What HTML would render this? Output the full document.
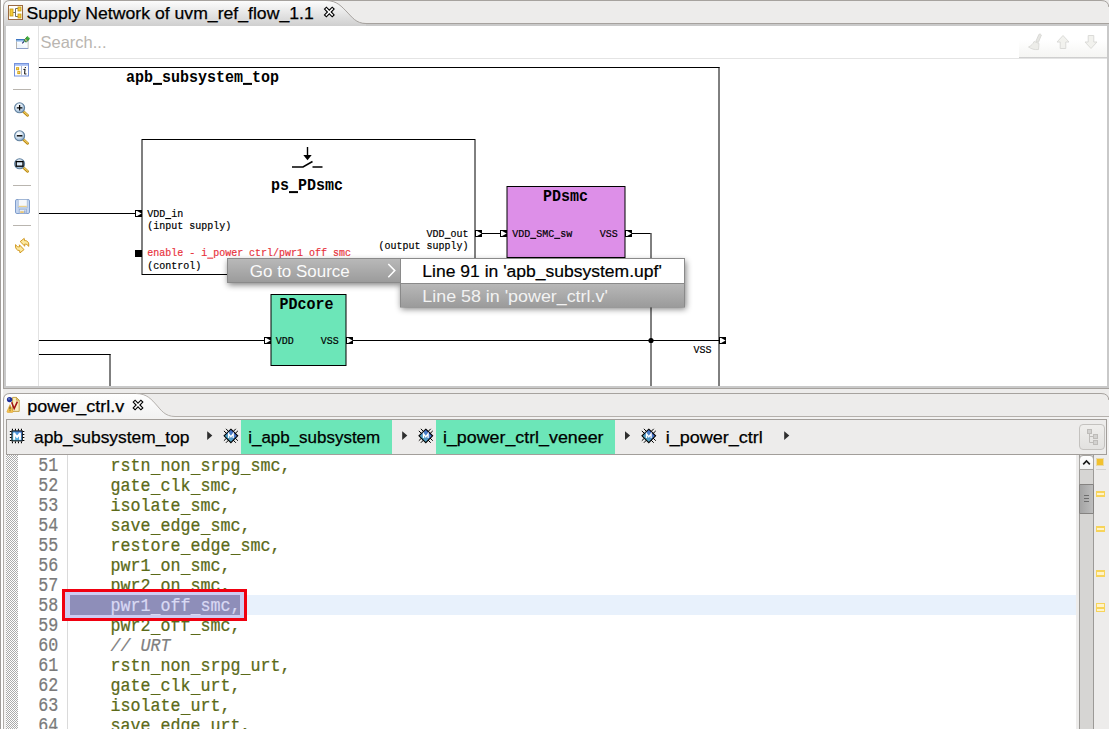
<!DOCTYPE html>
<html><head><meta charset="utf-8"><title>Supply Network</title>
<style>
html,body{margin:0;padding:0;}
body{width:1109px;height:729px;overflow:hidden;background:#EDECEB;position:relative;font-family:"Liberation Sans",sans-serif;}
.abs{position:absolute;}
svg{position:absolute;left:0;top:0;}
text{white-space:pre;}
</style></head><body>


<div class="abs" style="left:0;top:0;width:1px;height:729px;background:#A19D9A"></div>
<div class="abs" style="left:1px;top:0;width:2px;height:729px;background:#fff"></div>

<!-- upper panel frame -->
<div class="abs" style="left:3px;top:23px;width:1106px;height:366px;background:#A6A29E"></div>
<div class="abs" style="left:4px;top:24px;width:1105px;height:364px;background:#C9C9C9"></div>
<div class="abs" style="left:6px;top:26px;width:1101px;height:360px;background:#fff"></div>
<!-- search row / toolbar -->
<div class="abs" style="left:38px;top:26px;width:1px;height:360px;background:#E2E2E2"></div>
<div class="abs" style="left:39px;top:58px;width:980px;height:1px;background:#E4E4E4"></div>
<div class="abs" style="left:1019px;top:26px;width:88px;height:31px;background:linear-gradient(#fff 45%,#F5F5F3)"></div>
<div class="abs" style="left:1019px;top:57px;width:88px;height:1px;background:#CFCFCF"></div>
<div class="abs" style="left:1019px;top:58px;width:88px;height:1px;background:#E4E4E4"></div>

<!-- lower panel -->
<div class="abs" style="left:4px;top:417px;width:1105px;height:312px;background:#F3F2F1"></div>
<div class="abs" style="left:3px;top:400px;width:1px;height:329px;background:#B0ACA9"></div>
<div class="abs" style="left:6px;top:455px;width:1070px;height:274px;background:#fff"></div>
<div class="abs" style="left:4px;top:394px;width:1105px;height:23px;background:#EDECEB"></div>
<!-- breadcrumb -->
<div class="abs" style="left:6px;top:419px;width:1101px;height:36px;background:#EDECEB;border:1px solid #A29E9A;box-sizing:border-box"></div>
<div class="abs" style="left:241px;top:420px;width:151px;height:34px;background:#6CE6B8"></div>
<div class="abs" style="left:436px;top:420px;width:179px;height:34px;background:#6CE6B8"></div>
<div class="abs" style="left:1079px;top:424px;width:26px;height:26px;box-sizing:border-box;border:1px solid #C4C2BF;border-radius:4px;background:linear-gradient(#EFEEEC,#E2E1DF)"></div>
<!-- editor -->
<div class="abs" style="left:6px;top:455px;width:12px;height:274px;background-image:conic-gradient(#ABABAB 25%,#fff 0 50%,#ABABAB 0 75%,#fff 0);background-size:2px 2px"></div>
<div class="abs" style="left:67px;top:455px;width:1px;height:274px;background:#DADADA"></div>
<div class="abs" style="left:68px;top:595px;width:1008px;height:20px;background:#E8F1FC"></div>
<!-- right strip + scrollbar + overview ruler -->
<div class="abs" style="left:1076px;top:455px;width:33px;height:274px;background:#EDECEB"></div>
<div class="abs" style="left:1079px;top:455px;width:15px;height:274px;background:#D6D5D3;border-left:1px solid #9C9A97;border-right:1px solid #9C9A97;box-sizing:border-box"></div>
<div class="abs" style="left:1079px;top:455px;width:15px;height:15px;box-sizing:border-box;border:1px solid #A8A6A3;border-radius:4px 4px 0 0;background:linear-gradient(#fff,#F2F2F2)"></div>
<div class="abs" style="left:1079px;top:484px;width:15px;height:30px;box-sizing:border-box;border:1px solid #858381;border-radius:1px;background:linear-gradient(90deg,#A4A4A4,#BDBDBD)"></div>
<div class="abs" style="left:1096px;top:469px;width:10px;height:1px;background:#D4D2CF"></div>
<div class="abs" style="left:1096px;top:458px;width:8px;height:8px;background:#F2C12E;border:1px solid #E8D9A8;box-sizing:border-box"></div>

<div class="abs" style="left:1096px;top:491px;width:9px;height:6px;box-sizing:border-box;border:2px solid #F7D45A;border-left-width:1.5px;border-right-width:1.5px;background:#FFF3C8"></div>
<div class="abs" style="left:1096px;top:526px;width:9px;height:6px;box-sizing:border-box;border:2px solid #F7D45A;border-left-width:1.5px;border-right-width:1.5px;background:#FFF3C8"></div>
<div class="abs" style="left:1096px;top:570px;width:9px;height:7px;box-sizing:border-box;border:2px solid #F7D45A;border-left-width:1.5px;border-right-width:1.5px;background:#FFF3C8"></div>
<div class="abs" style="left:1096px;top:603px;width:9px;height:9px;box-sizing:border-box;border:1.5px solid #F7D45A;background:#FFF3C8"></div>
<div class="abs" style="left:1096px;top:606.5px;width:9px;height:2px;background:#F7D45A"></div>
<svg width="1109" height="729" viewBox="0 0 1109 729">
<defs>
<linearGradient id="tabg" x1="0" y1="0" x2="0" y2="1"><stop offset="0" stop-color="#FDFDFD"/><stop offset="1" stop-color="#CFCFCF"/></linearGradient>
<linearGradient id="tabg2" x1="0" y1="0" x2="0" y2="1"><stop offset="0" stop-color="#FFFFFF"/><stop offset="1" stop-color="#F2F2F2"/></linearGradient>
<linearGradient id="mg" x1="0" y1="0" x2="0" y2="1"><stop offset="0" stop-color="#B9B9B9"/><stop offset="1" stop-color="#9B9B9B"/></linearGradient>
<filter id="sh" x="-10%" y="-30%" width="120%" height="180%"><feGaussianBlur stdDeviation="3.4"/></filter>
<radialGradient id="lens" cx="0.38" cy="0.32" r="0.72"><stop offset="0" stop-color="#FFFFFF"/><stop offset="0.55" stop-color="#CFE0F0"/><stop offset="1" stop-color="#7C9FC2"/></radialGradient>
<linearGradient id="cg" x1="1" y1="0" x2="0" y2="1"><stop offset="0" stop-color="#4A78D8"/><stop offset="1" stop-color="#62CDE2"/></linearGradient>
<linearGradient id="ig" x1="1" y1="0" x2="0" y2="1"><stop offset="0.2" stop-color="#4464C8"/><stop offset="0.9" stop-color="#56BEC6"/></linearGradient>
</defs>
<path d="M3,26 L3,7 Q3,0.5 10,0.5 L326,0.5 C337,0.5 342,7 347,12 S356,23.5 366,23.5 L366,26 Z" fill="url(#tabg)"/>
<path d="M3.5,26 L3.5,7 Q3.5,0.5 10,0.5 L1101,0.5 Q1108.5,0.5 1108.8,7" fill="none" stroke="#A6A29E" stroke-width="1"/>
<path d="M326,0.5 C337,0.5 342,7 347,12 S356,23.5 366,23.5" fill="none" stroke="#A6A29E" stroke-width="1"/>
<g>
<rect x="8.5" y="5.5" width="14" height="14" fill="#fff" stroke="#9A6A42"/>
<path d="M13,12.5 H16 M15.5,8.5 V16.5 M15.5,8.5 H18 M15.5,16.5 H18" stroke="#6B6B6B" stroke-width="1" fill="none"/>
<rect x="10" y="9" width="3" height="7" fill="#F4CC3A" stroke="#C79A10" stroke-width="0.8"/>
<rect x="18" y="7" width="3" height="4" fill="#F4CC3A" stroke="#C79A10" stroke-width="0.8"/>
<rect x="18" y="14" width="3" height="4" fill="#F4CC3A" stroke="#C79A10" stroke-width="0.8"/>
</g>
<text x="26.5" y="19" font-family="Liberation Sans" font-size="17.4" fill="#000" stroke="#000" stroke-width="0.25" textLength="287.2" lengthAdjust="spacingAndGlyphs" >Supply Network of uvm_ref_flow_1.1</text>
<g transform="translate(329.3,12)"><path d="M-4.8,-2.9 L-2.9,-4.8 L0,-1.9 L2.9,-4.8 L4.8,-2.9 L1.9,0 L4.8,2.9 L2.9,4.8 L0,1.9 L-2.9,4.8 L-4.8,2.9 L-1.9,0 Z" fill="#fff" stroke="#000" stroke-width="1.15" stroke-linejoin="miter"/></g>
<text x="40.5" y="48" font-family="Liberation Sans" font-size="16.5" fill="#B9B5B0" textLength="66" lengthAdjust="spacingAndGlyphs" >Search...</text>
<g transform="translate(14,33)">
<rect x="2.5" y="6.5" width="11.5" height="9" fill="#EEF5FD" stroke="#B4B2AC"/>
<path d="M2.5,15.5 H14" stroke="#8C9EC6"/>
<path d="M3,10 L13.5,15 V9 H3 Z" fill="#FAFCFF"/>
<rect x="2" y="6" width="12.5" height="1.6" fill="#3C76C4"/>
<rect x="2" y="7.6" width="12.5" height="1" fill="#9CC2EE"/>
<path d="M8.2,10.4 L10.2,8.4" stroke="#1C2C6C" stroke-width="1.1"/>
<path d="M10,7.4 L13.4,3.4 L15.8,5.6 L12,9.2 Z" fill="#3CAA3C" stroke="#1E7A22" stroke-width="0.8" stroke-linejoin="round"/>
<path d="M11,6.2 L13,8.2" stroke="#C8A884" stroke-width="1.5"/>
<path d="M13.2,3.4 L15.8,5.8" stroke="#78D070" stroke-width="1"/>
</g>
<g transform="translate(14,63)">
<rect x="0.5" y="0.5" width="14" height="12.5" fill="#fff" stroke="#7492DC"/>
<rect x="1" y="1" width="13" height="1.8" fill="#A4BCF2"/>
<path d="M7.5,3 V12.6" stroke="#AEB8CC"/>
<rect x="2.1" y="4.2" width="3" height="3" fill="#D6A412"/><rect x="3.1" y="5.2" width="1" height="1" fill="#FBE9A8"/>
<rect x="3.3" y="8.1" width="3" height="3" fill="#D6A412"/><rect x="4.3" y="9.1" width="1" height="1" fill="#FBE9A8"/>
<path d="M9.4,6.6 Q10.6,6 11,6.4 L10.6,10.4 Q10.8,11.4 12.4,10.8" stroke="#1a1a1a" stroke-width="1.1" fill="none"/>
<rect x="10.8" y="4" width="1.1" height="1.1" fill="#1a1a1a"/>
</g>
<rect x="13" y="89" width="18" height="1" fill="#B9B5AF"/>
<rect x="13" y="185" width="18" height="1" fill="#B9B5AF"/>
<rect x="13" y="225" width="18" height="1" fill="#B9B5AF"/>
<g transform="translate(14,102)"><path d="M9.3,9.5 L13.7,13.5" stroke="#B8860B" stroke-width="2.5" stroke-linecap="round"/><path d="M9.3,9.2 L13.6,13.1" stroke="#F1D06B" stroke-width="1.1" stroke-linecap="round"/><circle cx="5.6" cy="5.8" r="5" fill="url(#lens)" stroke="#62829F" stroke-width="1.1"/><path d="M2.8,5.8 H8.4 M5.6,3 V8.6" stroke="#000" stroke-width="1.3"/></g>
<g transform="translate(14,130)"><path d="M9.3,9.5 L13.7,13.5" stroke="#B8860B" stroke-width="2.5" stroke-linecap="round"/><path d="M9.3,9.2 L13.6,13.1" stroke="#F1D06B" stroke-width="1.1" stroke-linecap="round"/><circle cx="5.6" cy="5.8" r="5" fill="url(#lens)" stroke="#62829F" stroke-width="1.1"/><path d="M2.8,5.8 H8.4" stroke="#000" stroke-width="1.4"/></g>
<g transform="translate(14,158)"><path d="M9.3,9.5 L13.7,13.5" stroke="#B8860B" stroke-width="2.5" stroke-linecap="round"/><path d="M9.3,9.2 L13.6,13.1" stroke="#F1D06B" stroke-width="1.1" stroke-linecap="round"/><circle cx="5.6" cy="5.8" r="5" fill="url(#lens)" stroke="#62829F" stroke-width="1.1"/><rect x="2.2" y="3.6" width="6.8" height="4.6" fill="#DCEBFA" stroke="#000" stroke-width="1.3"/></g>
<g transform="translate(15,199)">
<rect x="0.5" y="0.5" width="14" height="14" rx="1.4" fill="#C5D6F0" stroke="#7F9DCB"/>
<rect x="3.2" y="0.6" width="9" height="8.2" fill="#F6F8FB" stroke="#9DB2D2" stroke-width="0.7"/>
<path d="M3.6,7.4 H11.8" stroke="#EBD08A" stroke-width="1.2"/>
<rect x="4.2" y="10.2" width="7.2" height="4.3" fill="#E6EDF7" stroke="#8AA2CC" stroke-width="0.7"/>
<rect x="5.2" y="12.2" width="3.6" height="1.8" fill="#E9C677"/>
<rect x="9.2" y="11.4" width="1.3" height="2.8" fill="#8AA2CC"/>
</g>
<g transform="translate(15,238)" fill="#FCE9A0" stroke="#CF9418" stroke-width="0.95" stroke-linejoin="round">
<path d="M5.2,3.6 L9.2,0.4 L9.6,2.6 C12.6,2.4 14.4,4.8 13.6,8.4 C12.6,6.4 11.4,6 9.6,6.2 L9.8,8.2 Z"/>
<path d="M9,11.6 L5,14.9 L4.6,12.6 C1.6,12.6 0,10.2 0.6,6.6 C1.6,8.6 2.8,9 4.6,8.8 L4.4,6.8 Z"/>
</g>
<g opacity="0.9">
<path d="M1039,34.2 q1.6,-0.6 2.4,0.8 l-3,7.4 l-2.6,-1 Z" fill="#E4E4E0" stroke="#CFCFCB" stroke-width="0.8"/>
<path d="M1034,41.5 l5,2 l-0.5,6 c-4,0.5 -7,-0.5 -10,-2.5 c3,-1.5 4.5,-3 5.5,-5.5 Z" fill="#ECECE8" stroke="#D2D2CE" stroke-width="0.8"/>
<path d="M1063,35.5 l6,6.5 h-3.2 v6.5 h-5.6 v-6.5 h-3.2 Z" fill="#F1F1ED" stroke="#D4D4D0" stroke-width="0.9"/>
<path d="M1091,48.5 l6,-6.5 h-3.2 v-6.5 h-5.6 v6.5 h-3.2 Z" fill="#F1F1ED" stroke="#D4D4D0" stroke-width="0.9"/>
</g>
<g fill="none" stroke="#000" stroke-width="1">
<path d="M39,67.5 H719.5"/>
<path d="M719,67 V386"/>
<rect x="142" y="139.5" width="333" height="135" fill="#fff"/>
<path d="M39,213.5 H135"/>
<path d="M482,233.5 H500"/>
<rect x="507" y="186.5" width="118" height="71" fill="#DD8FE8"/>
<path d="M632,233.5 H650.5 M651,233 V386"/>
<rect x="271" y="294.5" width="75" height="71" fill="#6CE6B8"/>
<path d="M39,340.5 H264 M353,340.5 H719"/>
<path d="M39,354.5 H110.5 M110,354 V386"/>
</g>
<circle cx="651" cy="340.5" r="2.6" fill="#000"/>
<rect x="135" y="210" width="7" height="7" fill="#000"/><path d="M136,211 L137.2,211 L141.6,213.5 L137.2,216 L136,216 Z" fill="#fff"/>
<rect x="475" y="230" width="7" height="7" fill="#000"/><path d="M476,231 L477.2,231 L481.6,233.5 L477.2,236 L476,236 Z" fill="#fff"/>
<rect x="500" y="230" width="7" height="7" fill="#000"/><path d="M501,231 L502.2,231 L506.6,233.5 L502.2,236 L501,236 Z" fill="#fff"/>
<rect x="625" y="230" width="7" height="7" fill="#000"/><path d="M626,231 L627.2,231 L631.6,233.5 L627.2,236 L626,236 Z" fill="#fff"/>
<rect x="264" y="337" width="7" height="7" fill="#000"/><path d="M265,338 L266.2,338 L270.6,340.5 L266.2,343 L265,343 Z" fill="#fff"/>
<rect x="346" y="337" width="7" height="7" fill="#000"/><path d="M347,338 L348.2,338 L352.6,340.5 L348.2,343 L347,343 Z" fill="#fff"/>
<rect x="719" y="337" width="7" height="7" fill="#000"/><path d="M720,338 L721.2,338 L725.6,340.5 L721.2,343 L720,343 Z" fill="#fff"/>
<rect x="135" y="250" width="7" height="7" fill="#000"/>
<path d="M307.5,147 V156" stroke="#000" stroke-width="1.4" fill="none"/><path d="M303.3,155 H311.7 L307.5,160.2 Z" fill="#000"/>
<path d="M292,167 H303 L312.5,161.5 M312.5,167 H322.5" stroke="#000" stroke-width="1.6" fill="none"/>
<rect x="153.00" y="82.9" width="9" height="2" fill="#000"/><rect x="243.00" y="82.9" width="9" height="2" fill="#000"/><text transform="translate(126,81.5) scale(1,1.13)" font-family="Liberation Mono" font-size="15" fill="#000" font-weight="bold" >apb subsystem top</text>
<rect x="289.00" y="191.1" width="9" height="2" fill="#000"/><text transform="translate(271,189.7) scale(1,1.13)" font-family="Liberation Mono" font-size="15" fill="#000" font-weight="bold" >ps PDsmc</text>
<text transform="translate(543,201) scale(1,1.13)" font-family="Liberation Mono" font-size="15" fill="#000" font-weight="bold" >PDsmc</text>
<text transform="translate(279.6,309) scale(1,1.13)" font-family="Liberation Mono" font-size="15" fill="#000" font-weight="bold" >PDcore</text>
<rect x="165.20" y="218.0" width="6" height="1.1" fill="#000"/><text transform="translate(147.2,216.9) scale(1,1.15)" font-family="Liberation Mono" font-size="10" fill="#000" stroke="#000" stroke-width="0.18" >VDD in</text>
<text transform="translate(147.2,229) scale(1,1.15)" font-family="Liberation Mono" font-size="10" fill="#000" stroke="#000" stroke-width="0.18" >(input supply)</text>
<rect x="207.20" y="257.59999999999997" width="6" height="1.1" fill="#E8323C"/><text transform="translate(147.2,256.4) scale(1,1.15)" font-family="Liberation Mono" font-size="10" fill="#E8323C" stroke="#E8323C" stroke-width="0.18" >enable - i power ctrl/pwr1 off smc</text>
<text transform="translate(147.2,268.8) scale(1,1.15)" font-family="Liberation Mono" font-size="10" fill="#000" stroke="#000" stroke-width="0.18" >(control)</text>
<rect x="444.60" y="237.79999999999998" width="6" height="1.1" fill="#000"/><text transform="translate(426.6,236.7) scale(1,1.15)" font-family="Liberation Mono" font-size="10" fill="#000" stroke="#000" stroke-width="0.18" >VDD out</text>
<text transform="translate(378.6,248.9) scale(1,1.15)" font-family="Liberation Mono" font-size="10" fill="#000" stroke="#000" stroke-width="0.18" >(output supply)</text>
<rect x="530.20" y="237.79999999999998" width="6" height="1.1" fill="#000"/><rect x="554.20" y="237.79999999999998" width="6" height="1.1" fill="#000"/><text transform="translate(512.2,236.7) scale(1,1.15)" font-family="Liberation Mono" font-size="10" fill="#000" stroke="#000" stroke-width="0.18" >VDD SMC sw</text>
<text transform="translate(599.8,236.7) scale(1,1.15)" font-family="Liberation Mono" font-size="10" fill="#000" stroke="#000" stroke-width="0.18" >VSS</text>
<text transform="translate(275.8,344) scale(1,1.15)" font-family="Liberation Mono" font-size="10" fill="#000" stroke="#000" stroke-width="0.18" >VDD</text>
<text transform="translate(320.8,344) scale(1,1.15)" font-family="Liberation Mono" font-size="10" fill="#000" stroke="#000" stroke-width="0.18" >VSS</text>
<text transform="translate(693.6,352.5) scale(1,1.15)" font-family="Liberation Mono" font-size="10" fill="#000" stroke="#000" stroke-width="0.18" >VSS</text>
<rect x="228" y="261" width="173" height="24" fill="#000" opacity="0.5" filter="url(#sh)"/>
<rect x="401" y="261" width="285" height="48" fill="#000" opacity="0.5" filter="url(#sh)"/>
<rect x="227.5" y="258.5" width="173" height="24" fill="url(#mg)" stroke="#8A8A8A"/>
<rect x="400.5" y="258.5" width="284" height="48.5" fill="#fff" stroke="#8A8A8A"/>
<rect x="401" y="283" width="283" height="24" fill="url(#mg)"/>
<path d="M400.5,283.5 H684.5" stroke="#8A8A8A"/>
<text x="249.8" y="276.8" font-family="Liberation Sans" font-size="17.2" fill="#FAFAFA" textLength="100" lengthAdjust="spacingAndGlyphs" >Go to Source</text>
<path d="M388.3,264 L394.8,270.6 L388.3,277.2" fill="none" stroke="#fff" stroke-width="1.5"/>
<text x="422.3" y="277" font-family="Liberation Sans" font-size="17.4" fill="#000" stroke="#000" stroke-width="0.2" textLength="239.5" lengthAdjust="spacingAndGlyphs" >Line 91 in 'apb_subsystem.upf'</text>
<text x="422.3" y="301.5" font-family="Liberation Sans" font-size="17.4" fill="#F2F2F2" textLength="185.5" lengthAdjust="spacingAndGlyphs" >Line 58 in 'power_ctrl.v'</text>
<path d="M4,417 L4,400 Q4,393.5 10,393.5 L136,393.5 C147,393.5 152,400 156.5,405 S165,416.5 175,416.5 L175,417 Z" fill="url(#tabg2)"/>
<path d="M3.5,401 L3.5,400 Q3.5,393.5 10,393.5 L1101,393.5 Q1108.5,393.5 1108.8,400" fill="none" stroke="#A6A29E"/>
<path d="M136,393.5 C147,393.5 152,400 156.5,405 S165,416.5 175,416.5 H1109" fill="none" stroke="#B4B0AC"/>
<g transform="translate(7,396)">
<path d="M5.6,1.4 H9.4 L12.2,4.2 V15.4 H5.6 Z" fill="#FBEFC0" stroke="#C09A3A" stroke-width="0.9"/>
<path d="M9.4,1.4 V4.2 H12.2 Z" fill="#E8CF80" stroke="#C09A3A" stroke-width="0.7"/>
<path d="M4.6,6.2 L7.2,12.6 L10.4,5.6" stroke="#A01414" stroke-width="1.5" fill="none"/>
<path d="M3,8.6 L6.2,15.6 Q6.2,16.4 5.2,16.4 H0.8 Q-0.2,16.4 0,15.6 Z" fill="#F6C652" stroke="#D89A28" stroke-width="0.6"/>
<path d="M3,10.6 V13.4 M3,14.4 V15.2" stroke="#5A3A08" stroke-width="1"/>
<circle cx="2.6" cy="3.6" r="2.7" fill="#1E2F98"/>
<circle cx="2" cy="2.9" r="1.1" fill="#5F74C8"/>
</g>
<text x="27.2" y="411.7" font-family="Liberation Sans" font-size="17.4" fill="#000" stroke="#000" stroke-width="0.25" textLength="97" lengthAdjust="spacingAndGlyphs" >power_ctrl.v</text>
<g transform="translate(138,405)"><path d="M-4.8,-2.9 L-2.9,-4.8 L0,-1.9 L2.9,-4.8 L4.8,-2.9 L1.9,0 L4.8,2.9 L2.9,4.8 L0,1.9 L-2.9,4.8 L-4.8,2.9 L-1.9,0 Z" fill="#fff" stroke="#000" stroke-width="1.15" stroke-linejoin="miter"/></g>
<g transform="translate(10,429)"><rect x="0" y="0" width="14.2" height="14" rx="2" fill="#fff" opacity="0.75"/><g stroke="#000" stroke-width="1.7" stroke-dasharray="1.1 1.9"><path d="M1.9,0.7 H13 M1.9,13.3 H13 M0.7,1.9 V13 M13.5,1.9 V13"/></g><rect x="1.9" y="1.9" width="10.4" height="10" fill="url(#cg)" stroke="#000" stroke-width="1"/><path d="M4.2,10.8 V4.4 L7.1,8.2 L10,4.4 V10.8" stroke="#fff" stroke-width="1.9" fill="none" stroke-linejoin="round"/></g>
<text x="34" y="442.6" font-family="Liberation Sans" font-size="17.4" fill="#000" stroke="#000" stroke-width="0.25" textLength="155.5" lengthAdjust="spacingAndGlyphs" >apb_subsystem_top</text>
<path d="M207.2,431.3 L212.29999999999998,435.6 L207.2,439.90000000000003 Z" fill="#2E2E2E"/>
<g transform="translate(230.89999999999998,435.8)"><g transform="rotate(0)"><path d="M-2.4,-4.4 L-4.65,-6.7 M-4.4,-2.4 L-6.7,-4.65" stroke="#000" stroke-width="1" stroke-linecap="round"/></g><g transform="rotate(90)"><path d="M-2.4,-4.4 L-4.65,-6.7 M-4.4,-2.4 L-6.7,-4.65" stroke="#000" stroke-width="1" stroke-linecap="round"/></g><g transform="rotate(180)"><path d="M-2.4,-4.4 L-4.65,-6.7 M-4.4,-2.4 L-6.7,-4.65" stroke="#000" stroke-width="1" stroke-linecap="round"/></g><g transform="rotate(270)"><path d="M-2.4,-4.4 L-4.65,-6.7 M-4.4,-2.4 L-6.7,-4.65" stroke="#000" stroke-width="1" stroke-linecap="round"/></g><path d="M0,-6.6 L6.8,0 L0,6.8 L-6.8,0 Z" fill="url(#ig)" stroke="#000" stroke-width="1.1"/><path d="M-2.3,2.3 V-2.1 L0,1 L2.3,-2.1 V2.3" stroke="#fff" stroke-width="1.3" fill="none"/></g>
<text x="248.2" y="442.6" font-family="Liberation Sans" font-size="17.4" fill="#000" stroke="#000" stroke-width="0.25" textLength="132" lengthAdjust="spacingAndGlyphs" >i_apb_subsystem</text>
<path d="M402.2,431.3 L407.3,435.6 L402.2,439.90000000000003 Z" fill="#2E2E2E"/>
<g transform="translate(425.8,435.8)"><g transform="rotate(0)"><path d="M-2.4,-4.4 L-4.65,-6.7 M-4.4,-2.4 L-6.7,-4.65" stroke="#000" stroke-width="1" stroke-linecap="round"/></g><g transform="rotate(90)"><path d="M-2.4,-4.4 L-4.65,-6.7 M-4.4,-2.4 L-6.7,-4.65" stroke="#000" stroke-width="1" stroke-linecap="round"/></g><g transform="rotate(180)"><path d="M-2.4,-4.4 L-4.65,-6.7 M-4.4,-2.4 L-6.7,-4.65" stroke="#000" stroke-width="1" stroke-linecap="round"/></g><g transform="rotate(270)"><path d="M-2.4,-4.4 L-4.65,-6.7 M-4.4,-2.4 L-6.7,-4.65" stroke="#000" stroke-width="1" stroke-linecap="round"/></g><path d="M0,-6.6 L6.8,0 L0,6.8 L-6.8,0 Z" fill="url(#ig)" stroke="#000" stroke-width="1.1"/><path d="M-2.3,2.3 V-2.1 L0,1 L2.3,-2.1 V2.3" stroke="#fff" stroke-width="1.3" fill="none"/></g>
<text x="443" y="442.6" font-family="Liberation Sans" font-size="17.4" fill="#000" stroke="#000" stroke-width="0.25" textLength="160.5" lengthAdjust="spacingAndGlyphs" >i_power_ctrl_veneer</text>
<path d="M625,431.3 L630.1,435.6 L625,439.90000000000003 Z" fill="#2E2E2E"/>
<g transform="translate(648.8000000000001,435.8)"><g transform="rotate(0)"><path d="M-2.4,-4.4 L-4.65,-6.7 M-4.4,-2.4 L-6.7,-4.65" stroke="#000" stroke-width="1" stroke-linecap="round"/></g><g transform="rotate(90)"><path d="M-2.4,-4.4 L-4.65,-6.7 M-4.4,-2.4 L-6.7,-4.65" stroke="#000" stroke-width="1" stroke-linecap="round"/></g><g transform="rotate(180)"><path d="M-2.4,-4.4 L-4.65,-6.7 M-4.4,-2.4 L-6.7,-4.65" stroke="#000" stroke-width="1" stroke-linecap="round"/></g><g transform="rotate(270)"><path d="M-2.4,-4.4 L-4.65,-6.7 M-4.4,-2.4 L-6.7,-4.65" stroke="#000" stroke-width="1" stroke-linecap="round"/></g><path d="M0,-6.6 L6.8,0 L0,6.8 L-6.8,0 Z" fill="url(#ig)" stroke="#000" stroke-width="1.1"/><path d="M-2.3,2.3 V-2.1 L0,1 L2.3,-2.1 V2.3" stroke="#fff" stroke-width="1.3" fill="none"/></g>
<text x="665.8" y="442.6" font-family="Liberation Sans" font-size="17.4" fill="#000" stroke="#000" stroke-width="0.25" textLength="97" lengthAdjust="spacingAndGlyphs" >i_power_ctrl</text>
<path d="M784.2,431.3 L789.3000000000001,435.6 L784.2,439.90000000000003 Z" fill="#2E2E2E"/>
<g stroke="#BEBCB9" fill="#D2D1CF" stroke-width="1">
<path d="M1089.5,434 V442.5 H1093 M1089.5,436.5 H1093" fill="none"/>
<rect x="1087.5" y="429.5" width="4" height="4"/><rect x="1093.5" y="434.5" width="4" height="4"/><rect x="1093.5" y="440.5" width="4" height="4"/>
</g>
<path d="M1083.2,464.3 L1086.5,461 L1089.8,464.3" stroke="#1A1A1A" stroke-width="1.7" fill="none"/>
<path d="M1084,495.5 H1089 M1084,498.5 H1089 M1084,501.5 H1089" stroke="#6E6E6E" stroke-width="1"/>
<text transform="translate(38.2,471) scale(1,1.19)" font-family="Liberation Mono" font-size="16.667" fill="#7A7A7A" stroke="#7A7A7A" stroke-width="0.2" >51</text>
<rect x="150.60" y="474" width="10" height="1" fill="#5B6A18"/><rect x="190.60" y="474" width="10" height="1" fill="#5B6A18"/><rect x="240.60" y="474" width="10" height="1" fill="#5B6A18"/><text transform="translate(110.6,471) scale(1,1.13)" font-family="Liberation Mono" font-size="16.667" fill="#5B6A18" stroke="#5B6A18" stroke-width="0.22" >rstn non srpg smc,</text>
<text transform="translate(38.2,491) scale(1,1.19)" font-family="Liberation Mono" font-size="16.667" fill="#7A7A7A" stroke="#7A7A7A" stroke-width="0.2" >52</text>
<rect x="150.60" y="494" width="10" height="1" fill="#5B6A18"/><rect x="190.60" y="494" width="10" height="1" fill="#5B6A18"/><text transform="translate(110.6,491) scale(1,1.13)" font-family="Liberation Mono" font-size="16.667" fill="#5B6A18" stroke="#5B6A18" stroke-width="0.22" >gate clk smc,</text>
<text transform="translate(38.2,511) scale(1,1.19)" font-family="Liberation Mono" font-size="16.667" fill="#7A7A7A" stroke="#7A7A7A" stroke-width="0.2" >53</text>
<rect x="180.60" y="514" width="10" height="1" fill="#5B6A18"/><text transform="translate(110.6,511) scale(1,1.13)" font-family="Liberation Mono" font-size="16.667" fill="#5B6A18" stroke="#5B6A18" stroke-width="0.22" >isolate smc,</text>
<text transform="translate(38.2,531) scale(1,1.19)" font-family="Liberation Mono" font-size="16.667" fill="#7A7A7A" stroke="#7A7A7A" stroke-width="0.2" >54</text>
<rect x="150.60" y="534" width="10" height="1" fill="#5B6A18"/><rect x="200.60" y="534" width="10" height="1" fill="#5B6A18"/><text transform="translate(110.6,531) scale(1,1.13)" font-family="Liberation Mono" font-size="16.667" fill="#5B6A18" stroke="#5B6A18" stroke-width="0.22" >save edge smc,</text>
<text transform="translate(38.2,551) scale(1,1.19)" font-family="Liberation Mono" font-size="16.667" fill="#7A7A7A" stroke="#7A7A7A" stroke-width="0.2" >55</text>
<rect x="180.60" y="554" width="10" height="1" fill="#5B6A18"/><rect x="230.60" y="554" width="10" height="1" fill="#5B6A18"/><text transform="translate(110.6,551) scale(1,1.13)" font-family="Liberation Mono" font-size="16.667" fill="#5B6A18" stroke="#5B6A18" stroke-width="0.22" >restore edge smc,</text>
<text transform="translate(38.2,571) scale(1,1.19)" font-family="Liberation Mono" font-size="16.667" fill="#7A7A7A" stroke="#7A7A7A" stroke-width="0.2" >56</text>
<rect x="150.60" y="574" width="10" height="1" fill="#5B6A18"/><rect x="180.60" y="574" width="10" height="1" fill="#5B6A18"/><text transform="translate(110.6,571) scale(1,1.13)" font-family="Liberation Mono" font-size="16.667" fill="#5B6A18" stroke="#5B6A18" stroke-width="0.22" >pwr1 on smc,</text>
<text transform="translate(38.2,591) scale(1,1.19)" font-family="Liberation Mono" font-size="16.667" fill="#7A7A7A" stroke="#7A7A7A" stroke-width="0.2" >57</text>
<rect x="150.60" y="594" width="10" height="1" fill="#5B6A18"/><rect x="180.60" y="594" width="10" height="1" fill="#5B6A18"/><text transform="translate(110.6,591) scale(1,1.13)" font-family="Liberation Mono" font-size="16.667" fill="#5B6A18" stroke="#5B6A18" stroke-width="0.22" >pwr2 on smc,</text>
<text transform="translate(38.2,611) scale(1,1.19)" font-family="Liberation Mono" font-size="16.667" fill="#7A7A7A" stroke="#7A7A7A" stroke-width="0.2" >58</text>
<text transform="translate(38.2,631) scale(1,1.19)" font-family="Liberation Mono" font-size="16.667" fill="#7A7A7A" stroke="#7A7A7A" stroke-width="0.2" >59</text>
<rect x="150.60" y="634" width="10" height="1" fill="#5B6A18"/><rect x="190.60" y="634" width="10" height="1" fill="#5B6A18"/><text transform="translate(110.6,631) scale(1,1.13)" font-family="Liberation Mono" font-size="16.667" fill="#5B6A18" stroke="#5B6A18" stroke-width="0.22" >pwr2 off smc,</text>
<text transform="translate(38.2,651) scale(1,1.19)" font-family="Liberation Mono" font-size="16.667" fill="#7A7A7A" stroke="#7A7A7A" stroke-width="0.2" >60</text>
<text transform="translate(110.6,651) scale(1,1.13)" font-family="Liberation Mono" font-size="16.667" fill="#7F7F7F" stroke="#7F7F7F" stroke-width="0.22" font-style="italic" >// URT</text>
<text transform="translate(38.2,671) scale(1,1.19)" font-family="Liberation Mono" font-size="16.667" fill="#7A7A7A" stroke="#7A7A7A" stroke-width="0.2" >61</text>
<rect x="150.60" y="674" width="10" height="1" fill="#5B6A18"/><rect x="190.60" y="674" width="10" height="1" fill="#5B6A18"/><rect x="240.60" y="674" width="10" height="1" fill="#5B6A18"/><text transform="translate(110.6,671) scale(1,1.13)" font-family="Liberation Mono" font-size="16.667" fill="#5B6A18" stroke="#5B6A18" stroke-width="0.22" >rstn non srpg urt,</text>
<text transform="translate(38.2,691) scale(1,1.19)" font-family="Liberation Mono" font-size="16.667" fill="#7A7A7A" stroke="#7A7A7A" stroke-width="0.2" >62</text>
<rect x="150.60" y="694" width="10" height="1" fill="#5B6A18"/><rect x="190.60" y="694" width="10" height="1" fill="#5B6A18"/><text transform="translate(110.6,691) scale(1,1.13)" font-family="Liberation Mono" font-size="16.667" fill="#5B6A18" stroke="#5B6A18" stroke-width="0.22" >gate clk urt,</text>
<text transform="translate(38.2,711) scale(1,1.19)" font-family="Liberation Mono" font-size="16.667" fill="#7A7A7A" stroke="#7A7A7A" stroke-width="0.2" >63</text>
<rect x="180.60" y="714" width="10" height="1" fill="#5B6A18"/><text transform="translate(110.6,711) scale(1,1.13)" font-family="Liberation Mono" font-size="16.667" fill="#5B6A18" stroke="#5B6A18" stroke-width="0.22" >isolate urt,</text>
<text transform="translate(38.2,731) scale(1,1.19)" font-family="Liberation Mono" font-size="16.667" fill="#7A7A7A" stroke="#7A7A7A" stroke-width="0.2" >64</text>
<rect x="150.60" y="734" width="10" height="1" fill="#5B6A18"/><rect x="200.60" y="734" width="10" height="1" fill="#5B6A18"/><text transform="translate(110.6,731) scale(1,1.13)" font-family="Liberation Mono" font-size="16.667" fill="#5B6A18" stroke="#5B6A18" stroke-width="0.22" >save edge urt,</text>
<rect x="62" y="589" width="185" height="32" fill="#F00010"/>
<rect x="65" y="592" width="179" height="26" fill="#CDCDF2"/>
<rect x="70" y="595" width="170" height="20" fill="#8E8EB9"/>
<rect x="150.60" y="614" width="10" height="1" fill="#D9D9F4"/><rect x="190.60" y="614" width="10" height="1" fill="#D9D9F4"/><text transform="translate(110.6,611) scale(1,1.13)" font-family="Liberation Mono" font-size="16.667" fill="#D9D9F4" stroke="#D9D9F4" stroke-width="0.22" >pwr1 off smc,</text>
</svg>
</body></html>
